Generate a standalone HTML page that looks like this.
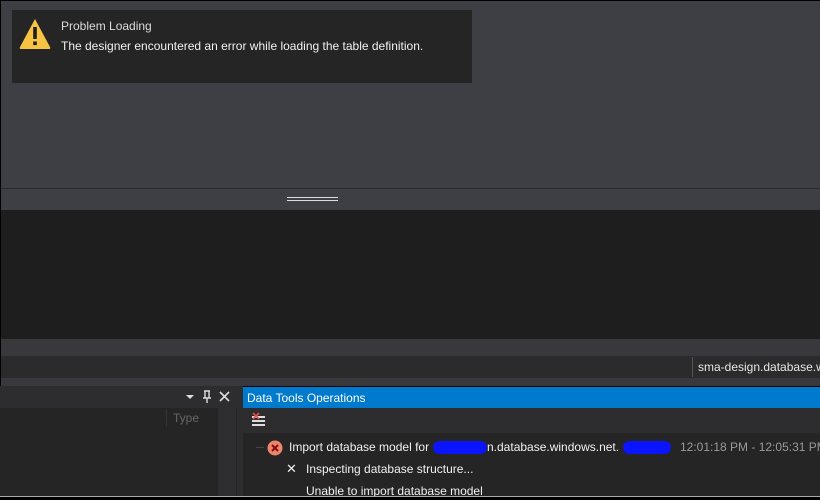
<!DOCTYPE html>
<html><head><style>
*{margin:0;padding:0;box-sizing:border-box}
body{width:820px;height:500px;overflow:hidden;background:#000;font-family:"Liberation Sans",sans-serif;position:relative}
.a{position:absolute}
</style></head><body>
<div class="a" style="left:1px;top:1px;width:819px;height:187px;background:#3e3e45"></div>
<div class="a" style="left:12px;top:10px;width:460px;height:73px;background:#252526"></div>
<svg class="a" style="left:18px;top:17px" width="34" height="34" viewBox="0 0 34 34"><path d="M17 2 L32 30 Q33 32 31 32 L3 32 Q1 32 2 30 Z" fill="#f6c343"/><rect x="15.2" y="10" width="3.6" height="12" fill="#1e1e1e"/><rect x="15.2" y="24.5" width="3.6" height="3.6" fill="#1e1e1e"/></svg>
<div class="a" style="left:61px;top:19px;color:#dcdcdc;font-size:12px">Problem Loading</div>
<div class="a" style="left:61px;top:39px;color:#f1f1f1;font-size:12px">The designer encountered an error while loading the table definition.</div>
<div class="a" style="left:1px;top:188px;width:819px;height:1px;background:#2a2a2e"></div>
<div class="a" style="left:1px;top:189px;width:819px;height:21px;background:#3e3e45"></div>
<div class="a" style="left:287px;top:197px;width:51px;height:1px;background:#ddd"></div>
<div class="a" style="left:287px;top:200px;width:51px;height:1px;background:#ddd"></div>
<div class="a" style="left:1px;top:210px;width:819px;height:129px;background:#1e1e1e"></div>
<div class="a" style="left:1px;top:339px;width:819px;height:17px;background:#38383d"></div>
<div class="a" style="left:1px;top:356px;width:819px;height:22px;background:#2b2b2e"></div>
<div class="a" style="left:692px;top:357px;width:1px;height:20px;background:#555"></div>
<div class="a" style="left:698px;top:360px;color:#e6e6e6;font-size:12px;white-space:nowrap">sma-design.database.w</div>
<div class="a" style="left:1px;top:378px;width:819px;height:8px;background:#38383d"></div>
<div class="a" style="left:0;top:386px;width:237px;height:22px;background:#2d2d30"></div>
<svg class="a" style="left:185px;top:389px" width="48" height="16"><path d="M1 6 L9 6 L5 10 Z" fill="#ddd"/><path d="M19 2 L25 2 M20 2 L20 9 L24 9 L24 2 M18 9 L26 9 M22 9 L22 14" stroke="#ddd" stroke-width="1.4" fill="none"/><path d="M35 3 L44 12 M44 3 L35 12" stroke="#ddd" stroke-width="1.6"/></svg>
<div class="a" style="left:0;top:408px;width:237px;height:88px;background:#252526"></div>
<div class="a" style="left:166px;top:409px;width:1px;height:18px;background:#333"></div>
<div class="a" style="left:173px;top:411px;color:#666;font-size:12px">Type</div>
<div class="a" style="left:218px;top:408px;width:18px;height:88px;background:#2e2e31"></div>
<div class="a" style="left:237px;top:386px;width:6px;height:110px;background:#2d2d30"></div>
<div class="a" style="left:243px;top:387px;width:577px;height:21px;background:#007acc"></div>
<div class="a" style="left:247px;top:391px;color:#fff;font-size:12px">Data Tools Operations</div>
<div class="a" style="left:243px;top:408px;width:577px;height:25px;background:#2d2d30"></div>
<svg class="a" style="left:252px;top:412px" width="14" height="16"><rect x="0" y="4" width="13" height="2" fill="#ddd"/><rect x="0" y="8" width="13" height="2" fill="#ddd"/><rect x="0" y="12" width="13" height="2" fill="#ddd"/><path d="M1 1 L7 7 M7 1 L1 7" stroke="#e05050" stroke-width="1.6"/></svg>
<div class="a" style="left:243px;top:433px;width:577px;height:63px;background:#252526"></div>
<div class="a" style="left:256px;top:447px;width:8px;height:1px;background:#444"></div>
<svg class="a" style="left:267px;top:440px" width="16" height="16"><circle cx="8" cy="8" r="7.5" fill="#f0846a"/><path d="M5 5 L11 11 M11 5 L5 11" stroke="#7a1010" stroke-width="2"/></svg>
<div class="a" style="left:289px;top:440px;color:#f1f1f1;font-size:12px;white-space:nowrap">Import database model for</div>
<div class="a" style="left:487px;top:440px;color:#f1f1f1;font-size:12px;white-space:nowrap">n.database.windows.net.</div>
<div class="a" style="left:433px;top:441px;width:54px;height:13px;background:#0a14ff;border-radius:7px"></div>
<div class="a" style="left:623px;top:441px;width:48px;height:13px;background:#0a14ff;border-radius:7px"></div>
<div class="a" style="left:680px;top:440px;color:#999;font-size:12px;white-space:nowrap">12:01:18 PM - 12:05:31 PM</div>
<div class="a" style="left:286px;top:461px;color:#eee;font-size:13px">✕</div>
<div class="a" style="left:306px;top:462px;color:#f1f1f1;font-size:12px">Inspecting database structure...</div>
<div class="a" style="left:306px;top:484px;color:#f1f1f1;font-size:12px;text-decoration:underline">Unable to import database model</div>
<div class="a" style="left:0;top:496px;width:820px;height:1px;background:#aaa"></div>
<div class="a" style="left:0;top:497px;width:820px;height:3px;background:#000"></div>
</body></html>
